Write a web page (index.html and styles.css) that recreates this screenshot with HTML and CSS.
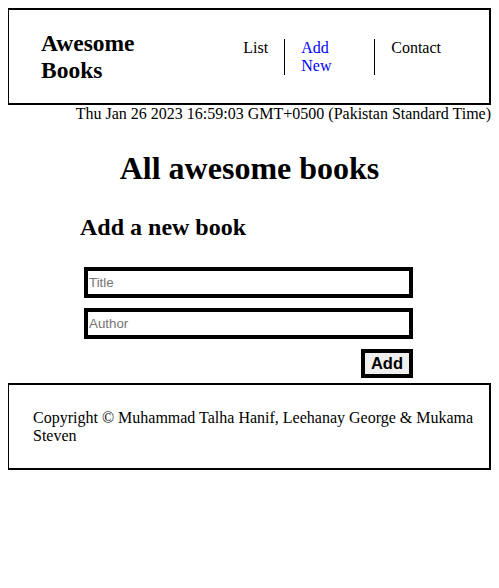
FILE: index.html
```html
<!DOCTYPE html>
<html lang="en">
<head>
<meta charset="utf-8">
<title>Awesome Books</title>
<link rel="stylesheet" href="styles.css">
</head>
<body>
<header class="site-header">
  <div class="logo">Awesome Books</div>
  <nav class="nav">
    <ul class="nav-list">
      <li class="nav-item"><a class="nav-link" href="#">List</a></li>
      <li class="nav-item nav-item-sep nav-item-add"><a class="nav-link nav-link-active" href="#">Add New</a></li>
      <li class="nav-item nav-item-sep"><a class="nav-link" href="#">Contact</a></li>
    </ul>
  </nav>
</header>
<p class="date">Thu Jan 26 2023 16:59:03 GMT+0500 (Pakistan Standard Time)</p>
<main class="main">
  <h1 class="page-title">All awesome books</h1>
  <section class="add-section">
    <h2 class="section-title">Add a new book</h2>
    <form class="book-form">
      <input class="field" type="text" placeholder="Title">
      <input class="field" type="text" placeholder="Author">
      <div class="form-actions">
        <button class="add-btn" type="button">Add</button>
      </div>
    </form>
  </section>
</main>
<footer class="site-footer">
  <p class="copyright">Copyright © Muhammad Talha Hanif, Leehanay George &amp; Mukama Steven</p>
</footer>
</body>
</html>
```
FILE: styles.css
```css
html, body {
  background: #fff;
}

body {
  margin: 8px;
  font-family: "Liberation Serif", "Times New Roman", serif;
  font-size: 16px;
  color: #000;
}

.site-header {
  display: flex;
  justify-content: space-between;
  align-items: center;
  margin-left: -1px;
  padding: 20px 32px;
  border: 2px solid #000;
  box-sizing: border-box;
  height: 97px;
}

.logo {
  font-weight: bold;
  font-size: 23.5px;
  width: 130px;
}

.nav-list {
  display: flex;
  list-style: none;
  margin: 0;
  padding: 0;
}

.nav-item {
  padding: 0 16px;
}

.nav-item-sep {
  border-left: 1px solid #000;
}

.nav-item-add {
  width: 57px;
}

.nav-link {
  color: #000;
  text-decoration: none;
}

.nav-link-active {
  color: #0000ff;
}

.date {
  margin: 0 0 0 -1px;
  text-align: right;
}

.main {
  display: flex;
  flex-direction: column;
}

.page-title {
  margin: 27px 0 27px;
  font-size: 32px;
  text-align: center;
}

.add-section {
  width: 339px;
  margin: 0 auto;
}

.section-title {
  margin: 0 0 26px;
  font-size: 24px;
}

.book-form {
  display: flex;
  flex-direction: column;
  gap: 10px;
  width: 329px;
  margin-left: 4px;
}

.field {
  box-sizing: border-box;
  width: 100%;
  height: 31px;
  margin: 0;
  padding: 1px 2px 1px 1px;
  border: 4px solid #000;
  font-family: "Liberation Sans", Arial, sans-serif;
  font-size: 13.33px;
  outline: none;
}

.field::placeholder {
  color: #757575;
}

.form-actions {
  display: flex;
  justify-content: flex-end;
}

.add-btn {
  box-sizing: border-box;
  height: 29px;
  padding: 0 6px;
  margin: 0;
  border: 4px solid #000;
  background: #efefef;
  font-family: "Liberation Sans", Arial, sans-serif;
  font-weight: bold;
  font-size: 16.5px;
  color: #000;
}

.site-footer {
  margin: 5px 0 0 -1px;
  padding: 24px 4px 24px 24px;
  border: 2px solid #000;
  height: 87px;
  box-sizing: border-box;
}

.copyright {
  margin: 0;
}
```
